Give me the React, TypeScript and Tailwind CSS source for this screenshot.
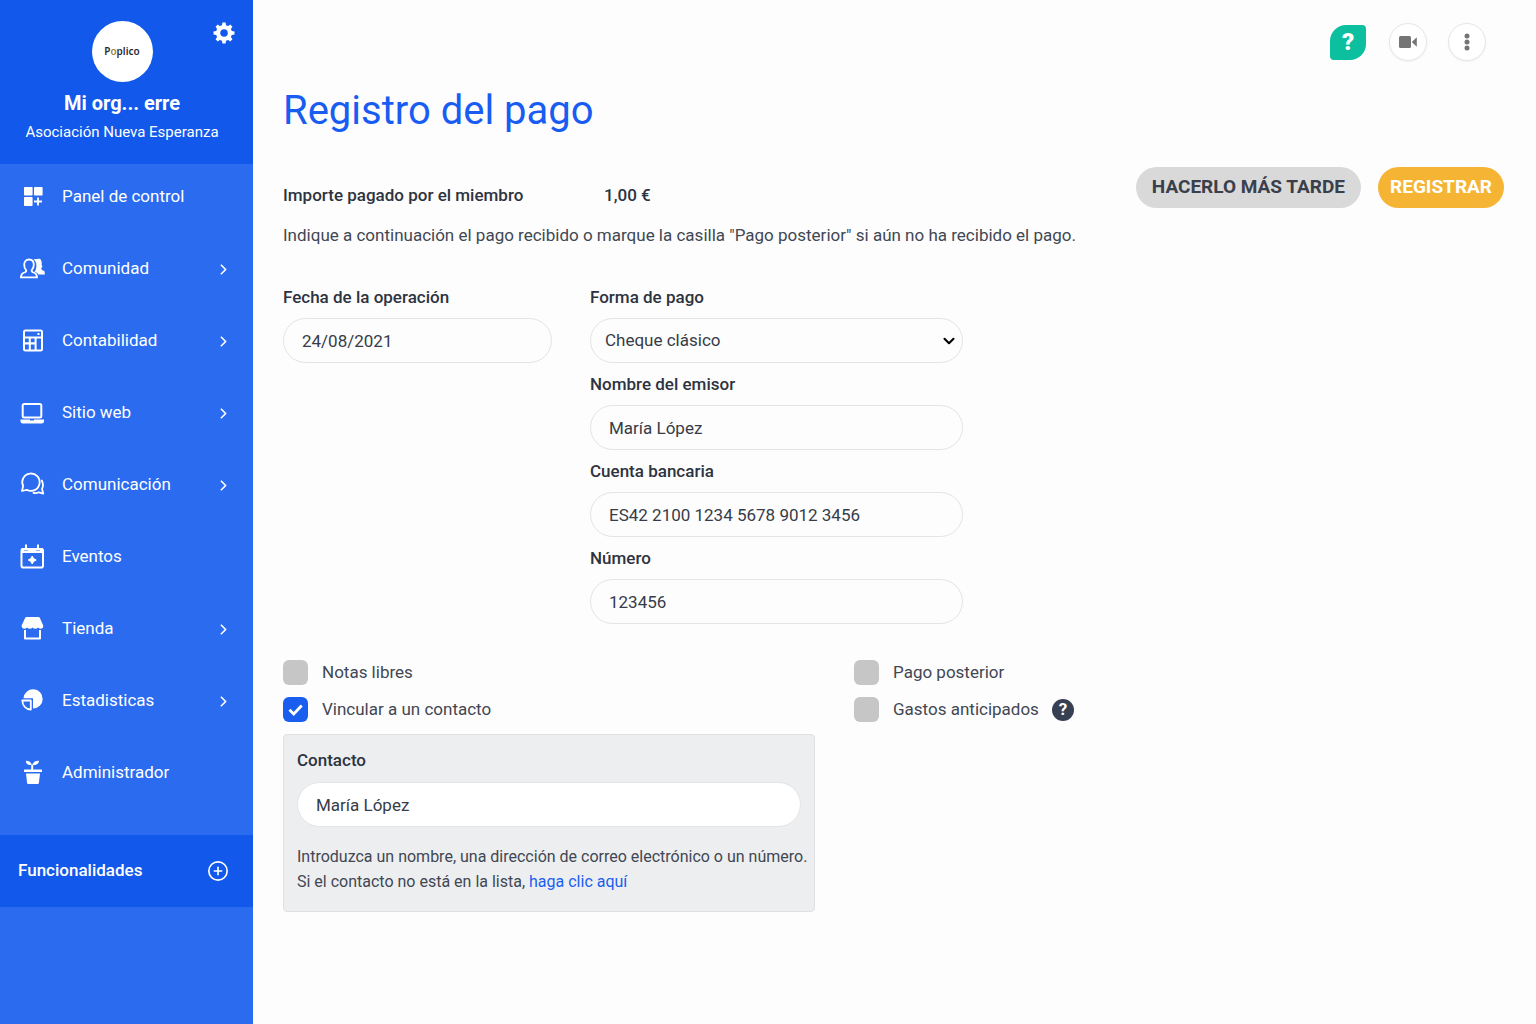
import { ReactNode } from "react";
import { ChevronRight, ChevronDown, CirclePlus } from "lucide-react";

const GearIcon = () => (
  <svg viewBox="0 0 22 22" className="size-[22px]" aria-hidden="true">
    <circle cx="11" cy="11" r="5.9" fill="none" stroke="currentColor" strokeWidth="4.2" />
    <path
      d="M8.8 4.5L9.4.5h3.2l.6 4zM8.8 17.5l.6 4h3.2l.6-4zM4.5 8.8l-4 .6v3.2l4 .6zM17.5 8.8l4 .6v3.2l-4 .6zM4.9 8l-2.4-3.2 2.3-2.3L8 4.9zM14 4.9l3.2-2.4 2.3 2.3L17.1 8zM17.1 14l2.4 3.2-2.3 2.3-3.2-2.4zM8 17.1l-3.2 2.4-2.3-2.3L4.9 14z"
      fill="currentColor"
    />
  </svg>
);

const DashboardIcon = () => (
  <>
    <g fill="currentColor">
      <rect x="6" y="5" width="8.6" height="8.6" rx="0.8" />
      <rect x="16" y="5" width="8.6" height="8.6" rx="0.8" />
      <rect x="6" y="15" width="8.6" height="9" rx="0.8" />
    </g>
    <path d="M20 15.5v8M16 19.5h8" stroke="currentColor" strokeWidth="1.8" />
  </>
);

const CommunityIcon = () => (
  <>
    <path
      d="M11 5.5c3.1 0 4.8 2.2 4.8 5.2 0 2.4-.8 4.2-2.1 5.4-.2 1.4.4 2 1.6 2.4 2.6.8 3.7 1.7 3.7 4.9H2.9c0-3.2 1.1-4.1 3.7-4.9 1.2-.4 1.800-1 1.600-2.400-1.300-1.200-2-3-2-5.400 0-3 1.700-5.200 4.800-5.200z"
      fill="none"
      stroke="currentColor"
      strokeWidth="1.8"
      strokeLinejoin="round"
    />
    <path
      d="M15.500 5.200l6.200-.4q1.400.5 1.500 2l.6 1.700-.2 2.400.9 1.500-1.200 1.600.3 1.700 2.900 1.600.4 3.300h-6.400c-1-1.500-2.300-2.300-4-2.800 1.300-1.700 1.900-3.900 1.900-6.400 0-2.500-.9-4.700-2.900-6.200z"
      fill="currentColor"
    />
  </>
);

const CalculatorIcon = () => (
  <>
    <path
      d="M7.5 3.500h15q2.500 0 2.500 2.500v17q0 2.500-2.500 2.500h-15Q5 25.500 5 23V6q0-2.500 2.500-2.500zM7 5.500v5h16v-5zM7 12.500v3.800h3.800v-3.800zM12.800 12.500v3.800h3.800v-3.800zM7 18.500v5h3.800v-5zM12.800 18.500v5h3.800v-5zM18.600 12.500v11H23v-11z"
      fill="currentColor"
      fillRule="evenodd"
    />
    <rect x="19.500" y="7" width="2" height="2" fill="currentColor" />
  </>
);

const LaptopIcon = () => (
  <>
    <rect x="4.7" y="6" width="18.6" height="13.5" rx="1.5" fill="none" stroke="currentColor" strokeWidth="2" />
    <path
      d="M2.500 21.500h9.500v.5q0 .6.600.6h2.800q.6 0 .6-.6v-.5H26v1.500q0 2.500-2.500 2.500H5q-2.500 0-2.500-2.500z"
      fill="currentColor"
    />
  </>
);

const ChatIcon = () => (
  <g fill="none" stroke="currentColor" strokeWidth="1.8" strokeLinejoin="round" strokeLinecap="round">
    <path d="M5.100 16a8.700 8.700 0 1 1 3.600 3.800L4 21z" />
    <path d="M23.800 10.500a9.500 9.500 0 0 1 .2 8.500l1.200 4.600-4.200-1.300a9 9 0 0 1-5.500.7" />
  </g>
);

const EventIcon = () => (
  <>
    <rect x="3.5" y="7" width="21.5" height="18.5" rx="1.8" fill="none" stroke="currentColor" strokeWidth="2" />
    <path d="M3.500 6h2.500v2.500h4V6h8v2.500h4V6h3v5H3.500z" fill="currentColor" />
    <path d="M8 2.500v5M20 2.500v5" stroke="currentColor" strokeWidth="2" />
    <path
      d="M14.200 14l1.400 2.600 2.600 1.400-2.600 1.400-1.400 2.600-1.400-2.600-2.600-1.400 2.600-1.400z"
      fill="currentColor"
      stroke="currentColor"
    />
  </>
);

const StoreIcon = () => (
  <>
    <path
      d="M8.500 3h12q1 0 1.400 1l3.300 7.500q.3 3-2.400 3.300-1.700 0-2.700-1.300-1 1.300-2.800 1.300-1.700 0-2.700-1.300-1 1.300-2.800 1.300-1.700 0-2.700-1.300-1 1.300-2.900 1.300-2.600-.3-2.600-3.300L7.100 4q.4-1 1.400-1z"
      fill="currentColor"
    />
    <path d="M7 16v8.500h15V16" fill="none" stroke="currentColor" strokeWidth="2" strokeLinejoin="round" />
  </>
);

const PieIcon = () => (
  <>
    <path d="M5.500 12.300a9.600 9.600 0 1 1 9.500 10.200V12.300z" fill="currentColor" />
    <path
      d="M4.300 14.500h8.500v9c-5-.3-8.300-3.800-8.500-9z"
      fill="none"
      stroke="currentColor"
      strokeWidth="1.8"
      strokeLinejoin="round"
    />
  </>
);

const PlantIcon = () => (
  <g fill="currentColor">
    <path d="M14 7.200c-.7-2.700-3-4.500-6-4.400-.4 2.700 1.400 4.300 5.200 4.300V12h2V7.100c3.800 0 5.600-1.600 5.900-4.300-3.700-.3-6 1.500-7.100 4.400z" />
    <rect x="6" y="11.500" width="18" height="2.500" rx="0.6" />
    <path d="M8 15.500h14l-1.100 9.600q-.1.900-1 .9h-9.800q-.9 0-1-.9z" />
  </g>
);

const NAV_ITEMS: { label: string; icon: ReactNode; expandable?: boolean }[] = [
  { label: "Panel de control", icon: <DashboardIcon /> },
  { label: "Comunidad", icon: <CommunityIcon />, expandable: true },
  { label: "Contabilidad", icon: <CalculatorIcon />, expandable: true },
  { label: "Sitio web", icon: <LaptopIcon />, expandable: true },
  { label: "Comunicación", icon: <ChatIcon />, expandable: true },
  { label: "Eventos", icon: <EventIcon /> },
  { label: "Tienda", icon: <StoreIcon />, expandable: true },
  { label: "Estadisticas", icon: <PieIcon />, expandable: true },
  { label: "Administrador", icon: <PlantIcon /> },
];

const Sidebar = () => (
  <aside className="flex w-[253px] shrink-0 flex-col bg-[#2a6bef] text-white">
    <div className="relative flex flex-col items-center bg-[#1158eb] pt-[21px] pr-[9px] pb-5">
      <div className="flex size-[61px] items-center justify-center rounded-full bg-white font-['Noto_Sans',sans-serif] text-[10px] font-semibold text-[#2b2b33]">
        <span>
          P<span className="text-[#a5823f]">o</span>plico
        </span>
      </div>
      <p className="mt-[9px] text-xl leading-6 font-bold">Mi org... erre</p>
      <p className="mt-[5px] text-[15px] leading-6">Asociación Nueva Esperanza</p>
      <button type="button" aria-label="Ajustes" className="absolute top-[22px] right-[18px]">
        <GearIcon />
      </button>
    </div>
    <nav className="flex flex-col gap-2.5 pt-0.5 pb-[31px]">
      {NAV_ITEMS.map(({ label, icon, expandable }) => (
        <a key={label} href="#" className="flex h-[62px] items-center pr-[21px] pl-[18px] text-[17px]">
          <svg viewBox="0 1 28 28" className="size-7" aria-hidden="true">
            {icon}
          </svg>
          <span className="ml-4 flex-1">{label}</span>
          {expandable && <ChevronRight className="size-[17px]" strokeWidth={2.4} />}
        </a>
      ))}
    </nav>
    <a href="#" className="flex h-[72px] items-center justify-between bg-[#1158eb] pr-6 pl-[18px] text-[17px] font-medium">
      Funcionalidades
      <CirclePlus className="size-[22px]" strokeWidth={1.8} />
    </a>
  </aside>
);

const labelClass = "text-[17px] leading-6 font-medium text-[#2d3340]";
const controlClass = "h-[45px] w-full rounded-full border border-[#e3e4e6] text-[17px] text-[#363c48]";

const Field = ({ id, label, value }: { id: string; label: string; value: string }) => (
  <div className="flex flex-col gap-[9px]">
    <label htmlFor={id} className={labelClass}>
      {label}
    </label>
    <input id={id} type="text" defaultValue={value} className={`px-[18px] ${controlClass}`} />
  </div>
);

const Checkbox = ({ label, checked = false }: { label: string; checked?: boolean }) => (
  <label className="flex h-[25px] items-center text-[17px] text-[#414753]">
    <span className="relative mr-3.5 size-[25px]">
      <input
        type="checkbox"
        defaultChecked={checked}
        className="peer block size-[25px] appearance-none rounded-md bg-[#c6c6c6] checked:bg-[#1a5ef0]"
      />
      <svg
        viewBox="0 0 25 25"
        className="pointer-events-none absolute inset-0 hidden peer-checked:block"
        aria-hidden="true"
      >
        <path d="M6.500 12.800l4.200 4.200 8-8.500" fill="none" stroke="white" strokeWidth="2.8" />
      </svg>
    </span>
    {label}
  </label>
);

const roundButton =
  "flex size-[38px] items-center justify-center rounded-full border border-[#e6e6e6] bg-white text-[#757575] shadow-xs";

export default function App() {
  return (
    <div className="flex min-h-screen bg-[#fdfdfd] font-[Roboto,sans-serif]">
      <Sidebar />
      <main className="flex-1 pr-8 pb-8 pl-[30px]">
        <div className="flex items-center justify-end pt-[23px] pr-[18px]">
          <button
            type="button"
            aria-label="Ayuda"
            className="mr-[23px] flex h-[35px] w-9 items-center justify-center rounded-tl-2xl rounded-tr-sm rounded-br-2xl rounded-bl-sm bg-[#0cbf9f] text-2xl font-black text-white"
          >
            ?
          </button>
          <button type="button" aria-label="Videollamada" className={`mr-[21px] ${roundButton}`}>
            <svg viewBox="0 0 20 20" className="size-5" fill="currentColor" aria-hidden="true">
              <rect x="1" y="4" width="12" height="12" rx="1.5" />
              <path d="M14 9.800l4.800-4.600v9.600L14 10.200z" />
            </svg>
          </button>
          <button type="button" aria-label="Más opciones" className={roundButton}>
            <svg viewBox="0 0 20 20" className="size-5" fill="currentColor" aria-hidden="true">
              <circle cx="10" cy="4" r="2.5" />
              <circle cx="10" cy="10" r="2.5" />
              <circle cx="10" cy="16" r="2.5" />
            </svg>
          </button>
        </div>

        <h1 className="mt-[26px] text-[40px] leading-12 text-[#185cf2]">Registro del pago</h1>

        <div className="mt-8 flex items-start justify-between">
          <div className="pt-4">
            <div className="flex text-[17px] leading-6 font-medium text-[#2d3340]">
              <span className="w-[321px]">Importe pagado por el miembro</span>
              <span>1,00 €</span>
            </div>
            <p className="mt-4 text-[17px] leading-6 text-[#414753]">
              Indique a continuación el pago recibido o marque la casilla "Pago posterior" si aún no ha recibido el pago.
            </p>
          </div>
          <div className="flex gap-[17px] text-[19px] font-bold whitespace-nowrap">
            <button type="button" className="h-[41px] rounded-full bg-[#d9d9d9] px-4 text-[#3a404b]">
              HACERLO MÁS TARDE
            </button>
            <button type="submit" form="pago" className="h-[41px] rounded-full bg-[#f5b434] px-3 text-white">
              REGISTRAR
            </button>
          </div>
        </div>

        <form id="pago" className="mt-[38px]">
          <div className="flex gap-[38px]">
            <div className="w-full max-w-[269px]">
              <Field id="fecha" label="Fecha de la operación" value="24/08/2021" />
            </div>
            <div className="flex w-full max-w-[373px] flex-col gap-[9px]">
              <label htmlFor="forma" className={labelClass}>
                Forma de pago
              </label>
              <div className="relative">
                <select id="forma" className={`appearance-none px-3.5 ${controlClass}`}>
                  <option>Cheque clásico</option>
                </select>
                <ChevronDown
                  className="pointer-events-none absolute top-3.5 right-[5px] size-[18px] text-black"
                  strokeWidth={2.8}
                />
              </div>
              <Field id="emisor" label="Nombre del emisor" value="María López" />
              <Field id="cuenta" label="Cuenta bancaria" value="ES42 2100 1234 5678 9012 3456" />
              <Field id="numero" label="Número" value="123456" />
            </div>
          </div>

          <div className="mt-9 flex gap-[39px]">
            <div className="flex w-full max-w-[532px] flex-col gap-3">
              <Checkbox label="Notas libres" />
              <Checkbox label="Vincular a un contacto" checked />
              <div className="rounded-sm border border-[#e0e1e4] bg-[#edeef0] px-[13px] pt-[13px] pb-[17px]">
                <label htmlFor="contacto" className={labelClass}>
                  Contacto
                </label>
                <input
                  id="contacto"
                  type="text"
                  defaultValue="María López"
                  className={`mt-[9px] bg-white px-[18px] ${controlClass}`}
                />
                <p className="mt-[17px] text-base leading-[25px] whitespace-nowrap text-[#414753]">
                  Introduzca un nombre, una dirección de correo electrónico o un número.
                  <br />
                  Si el contacto no está en la lista,{" "}
                  <a href="#" className="text-[#1a5ef0]">
                    haga clic aquí
                  </a>
                </p>
              </div>
            </div>
            <div className="flex flex-col gap-3">
              <Checkbox label="Pago posterior" />
              <div className="flex items-center gap-[13px]">
                <Checkbox label="Gastos anticipados" />
                <button
                  type="button"
                  aria-label="Más información"
                  className="flex size-[22px] items-center justify-center rounded-full bg-[#364052] text-[17px] font-bold text-white"
                >
                  ?
                </button>
              </div>
            </div>
          </div>
        </form>
      </main>
    </div>
  );
}
